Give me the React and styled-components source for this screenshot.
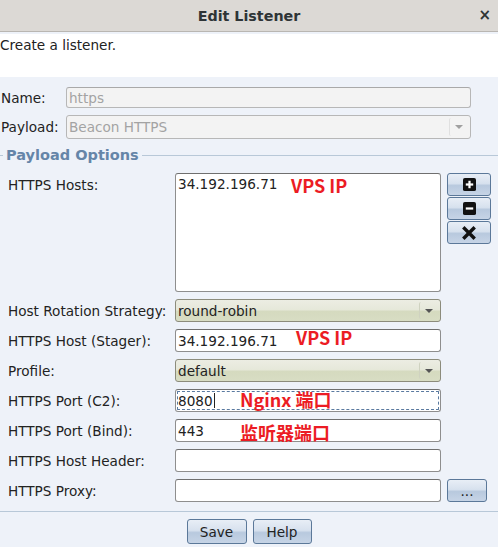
import styled, { createGlobalStyle } from "styled-components";

const GlobalStyle = createGlobalStyle`
  html, body {
    margin: 0;
    padding: 0;
    background: #eef2f9;
  }
  body {
    font-family: "DejaVu Sans", "Noto Sans CJK SC", sans-serif;
    font-size: 13.6px;
    color: #222;
  }
`;

const Window = styled.div`
  width: 498px;
  height: 547px;
  display: flex;
  flex-direction: column;
  background: #eef2f9;
  overflow: hidden;
`;

const TitleBar = styled.div`
  height: 31px;
  flex-shrink: 0;
  background: #dcd9d5;
  border-bottom: 1px solid #b9b6b2;
  display: flex;
  align-items: center;
  justify-content: center;
  position: relative;
  font-weight: bold;
  font-size: 14.3px;
  color: #2e3436;
`;

const Close = styled.span`
  position: absolute;
  right: 7px;
  top: 6px;
  font-size: 15px;
  font-weight: bold;
  color: #2e3436;
`;

const Intro = styled.div`
  margin-top: 2px;
  height: 43px;
  background: #fff;
  padding: 3px 0 0 0;
  box-sizing: border-box;
`;

const TopForm = styled.div`
  display: grid;
  grid-template-columns: 65px 405px;
  row-gap: 7px;
  align-items: center;
  padding: 10px 0 0 1px;
`;

const Label = styled.span`
  white-space: nowrap;
  align-self: ${(p) => (p.top ? "start" : "center")};
  padding-top: ${(p) => (p.top ? "4px" : "0")};
`;

const Field = styled.div`
  position: relative;
  height: ${(p) => p.h || 23}px;
  box-sizing: border-box;
  border: 1px solid ${(p) => (p.disabled ? "#b7b7b7" : "#8e8e8e")};
  border-top-color: ${(p) => (p.disabled ? "#a9a9a9" : "#6f6f6f")};
  border-radius: 3px;
  background: ${(p) => (p.disabled ? "#f3f3f3" : "#fff")};
  color: ${(p) => (p.disabled ? "#a3a3a3" : "#222")};
  display: flex;
  align-items: ${(p) => (p.multi ? "flex-start" : "center")};
  padding: ${(p) => (p.multi ? "2px 2px" : "0 2px")};
  outline: ${(p) => (p.focus ? "1px dashed #5a7aa0" : "none")};
  outline-offset: -3px;
`;

const Combo = styled.div`
  position: relative;
  height: ${(p) => p.h || 23}px;
  box-sizing: border-box;
  border: 1px solid ${(p) => (p.disabled ? "#b7b7b7" : "#8c8c7c")};
  border-radius: 3px;
  background: ${(p) =>
    p.disabled
      ? "#f3f3f3"
      : "linear-gradient(#ecede3 0%, #e6e8da 45%, #d5dabf 55%, #d8ddc4 100%)"};
  color: ${(p) => (p.disabled ? "#a3a3a3" : "#222")};
  display: flex;
  align-items: center;
  padding-left: 2px;
`;

const ComboText = styled.span`
  flex: 1;
`;

const Arrow = styled.span`
  width: 19px;
  height: calc(100% - 4px);
  margin-right: 2px;
  box-sizing: border-box;
  border-left: 1px solid ${(p) => (p.disabled ? "#e0e0e0" : "#cfd2c0")};
  border-radius: 2px;
  display: flex;
  align-items: center;
  justify-content: center;
  &::after {
    content: "";
    border-left: 4px solid transparent;
    border-right: 4px solid transparent;
    border-top: 4px solid ${(p) => (p.disabled ? "#a0a0a0" : "#555")};
  }
`;

const GroupTitle = styled.div`
  display: flex;
  align-items: center;
  gap: 3px;
  margin-top: 8px;
  color: #6585a8;
  font-weight: bold;
  font-size: 14.5px;
  &::before {
    content: "";
    width: 3px;
    height: 1px;
    background: #b8c8d8;
  }
  &::after {
    content: "";
    flex: 1;
    height: 1px;
    background: #b8c8d8;
  }
`;

const OptionsGrid = styled.div`
  display: grid;
  grid-template-columns: 161px 266px 44px;
  column-gap: 6px;
  row-gap: 7px;
  padding: 10px 0 0 8px;
`;

const SideButtons = styled.div`
  display: flex;
  flex-direction: column;
  gap: 1px;
`;

const BlueButton = styled.button`
  height: ${(p) => p.h || 23}px;
  width: ${(p) => p.w || 44}px;
  padding: 0;
  box-sizing: border-box;
  border: 1px solid #5b7899;
  border-radius: 3px;
  background: linear-gradient(#e8eef6 0%, #d7e1ee 45%, #b8c9de 55%, #c6d4e6 100%);
  font-family: "DejaVu Sans", sans-serif;
  font-size: 13.6px;
  color: #222;
  display: flex;
  align-items: center;
  justify-content: center;
`;

const Note = styled.span`
  position: absolute;
  left: ${(p) => p.x}px;
  top: ${(p) => p.y}px;
  color: #ec1c24;
  font-weight: bold;
  font-size: 18px;
  line-height: 22px;
  font-family: "Noto Sans CJK SC", "DejaVu Sans", sans-serif;
  white-space: nowrap;
`;

const Caret = styled.span`
  display: inline-block;
  width: 1px;
  height: 15px;
  background: #222;
  margin-left: 1px;
`;

const Footer = styled.div`
  margin-top: 9px;
  border-top: 1px solid #b8c8d8;
  display: flex;
  justify-content: center;
  gap: 6px;
  padding-top: 7px;
`;

const PlusIcon = () => (
  <svg width="13" height="13" viewBox="0 0 14 14">
    <rect x="0" y="0" width="14" height="14" rx="2" fill="#111" />
    <rect x="5.8" y="3" width="2.4" height="8" fill="#fff" />
    <rect x="3" y="5.8" width="8" height="2.4" fill="#fff" />
  </svg>
);

const MinusIcon = () => (
  <svg width="13" height="13" viewBox="0 0 14 14">
    <rect x="0" y="0" width="14" height="14" rx="2" fill="#111" />
    <rect x="3" y="5.8" width="8" height="2.4" fill="#fff" />
  </svg>
);

const CrossIcon = () => (
  <svg width="14" height="14" viewBox="0 0 14 14">
    <path d="M2.5 2.5 L11.5 11.5 M11.5 2.5 L2.5 11.5" stroke="#111" strokeWidth="3.4" strokeLinecap="square" />
  </svg>
);

export default function App() {
  return (
    <Window>
      <GlobalStyle />
      <TitleBar>
        Edit Listener
        <Close>×</Close>
      </TitleBar>
      <Intro>Create a listener.</Intro>
      <TopForm>
        <Label>Name:</Label>
        <Field disabled h={21}>https</Field>
        <Label>Payload:</Label>
        <Combo disabled h={24}>
          <ComboText>Beacon HTTPS</ComboText>
          <Arrow disabled />
        </Combo>
      </TopForm>
      <GroupTitle>Payload Options</GroupTitle>
      <OptionsGrid>
        <Label top>HTTPS Hosts:</Label>
        <Field multi h={119}>
          34.192.196.71
          <Note x={115} y={0}>VPS IP</Note>
        </Field>
        <SideButtons>
          <BlueButton><PlusIcon /></BlueButton>
          <BlueButton><MinusIcon /></BlueButton>
          <BlueButton><CrossIcon /></BlueButton>
        </SideButtons>

        <Label>Host Rotation Strategy:</Label>
        <Combo>
          <ComboText>round-robin</ComboText>
          <Arrow />
        </Combo>
        <span />

        <Label>HTTPS Host (Stager):</Label>
        <Field>
          34.192.196.71
          <Note x={120} y={-4}>VPS IP</Note>
        </Field>
        <span />

        <Label>Profile:</Label>
        <Combo>
          <ComboText>default</ComboText>
          <Arrow />
        </Combo>
        <span />

        <Label>HTTPS Port (C2):</Label>
        <Field focus>
          8080<Caret />
          <Note x={64} y={-2}>Nginx 端口</Note>
        </Field>
        <span />

        <Label>HTTPS Port (Bind):</Label>
        <Field>
          443
          <Note x={64} y={1}>监听器端口</Note>
        </Field>
        <span />

        <Label>HTTPS Host Header:</Label>
        <Field />
        <span />

        <Label>HTTPS Proxy:</Label>
        <Field />
        <BlueButton w={40}>...</BlueButton>
      </OptionsGrid>
      <Footer>
        <BlueButton w={60} h={25}>Save</BlueButton>
        <BlueButton w={59} h={25}>Help</BlueButton>
      </Footer>
    </Window>
  );
}
